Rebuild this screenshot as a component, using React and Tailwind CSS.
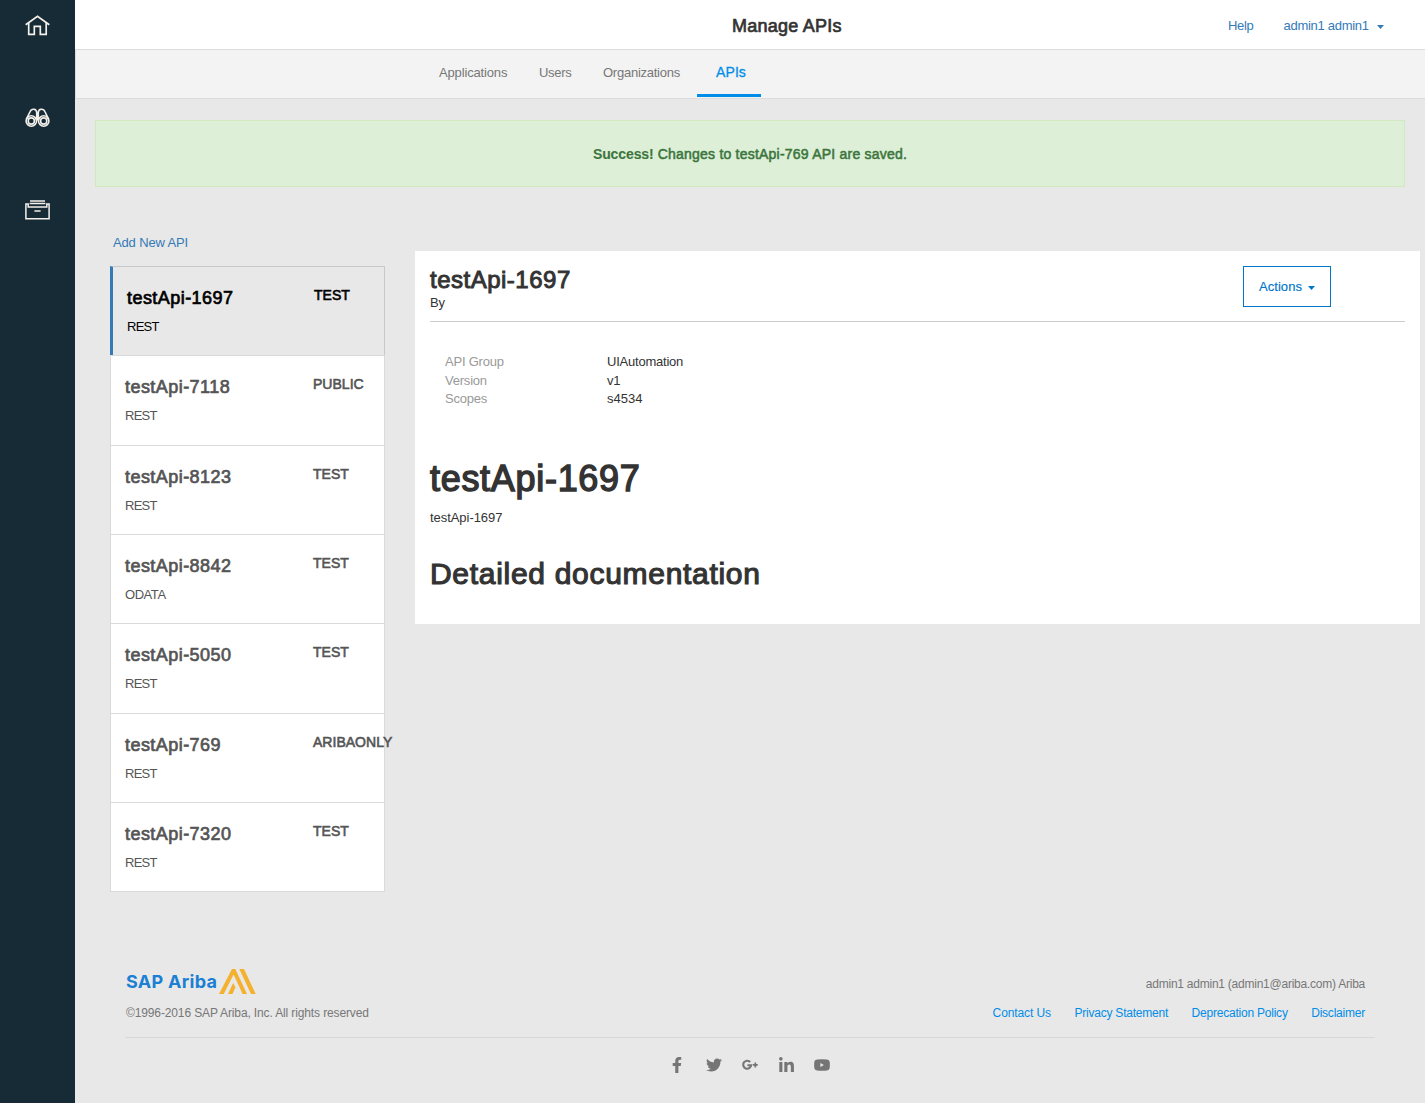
import { FaFacebookF, FaTwitter, FaLinkedinIn } from "react-icons/fa";

const apis = [
  { name: "testApi-1697", type: "REST", status: "TEST", active: true },
  { name: "testApi-7118", type: "REST", status: "PUBLIC" },
  { name: "testApi-8123", type: "REST", status: "TEST" },
  { name: "testApi-8842", type: "ODATA", status: "TEST" },
  { name: "testApi-5050", type: "REST", status: "TEST" },
  { name: "testApi-769", type: "REST", status: "ARIBAONLY" },
  { name: "testApi-7320", type: "REST", status: "TEST" },
];

function Caret({ className }) {
  return (
    <svg className={className} width="7" height="4" viewBox="0 0 7 4" fill="currentColor">
      <path d="M0 0h7L3.5 4z" />
    </svg>
  );
}

function HomeIcon() {
  return (
    <svg width="25" height="21" viewBox="0 0 25 21" fill="none" stroke="#f4f0eb" strokeWidth="1.7">
      <path d="M.7 9.8 12.5 1.2l11.8 8.6" />
      <path d="M3.7 8v11.3h5.6v-8h6v8h5.9V8" />
    </svg>
  );
}

function BinocularsIcon() {
  return (
    <svg width="25" height="20" viewBox="0 0 25 20" fill="none" stroke="#f4f0eb" strokeWidth="1.6">
      <circle cx="6.3" cy="13" r="5.2" />
      <circle cx="6.3" cy="13" r="3.1" />
      <circle cx="18.7" cy="13" r="5.2" />
      <circle cx="18.7" cy="13" r="3.1" />
      <path d="M1.3 11.4 5 3.8C6.4.2 11.6.4 11.7 4.6v7.6M23.7 11.4 20 3.8C18.6.2 13.4.4 13.3 4.6v7.6M11.2 7.6h2.6M11 11.8h3" />
    </svg>
  );
}

function ArchiveIcon() {
  return (
    <svg width="25" height="20" viewBox="0 0 25 20" fill="none" stroke="#f4f0eb" strokeWidth="1.5">
      <path d="M5 1.1h15M4.6 3.6h15.8" />
      <path d="M.9 3.9h2.3v3.2h18.6V3.9h2.3v14.9H.9z" />
      <path d="M9.4 11h6.2" />
    </svg>
  );
}

function GooglePlusIcon() {
  return (
    <svg width="16" height="12" viewBox="0 0 16 12" fill="none" stroke="currentColor">
      <path d="M8.2 3A4 4 0 1 0 9.2 6.2H5.4" strokeWidth="2.1" />
      <path d="M13.3 3.4v5M10.8 5.9h5" strokeWidth="1.7" />
    </svg>
  );
}

function YoutubeIcon() {
  return (
    <svg width="16" height="12" viewBox="0 0 16 12" fill="currentColor" fillRule="evenodd">
      <path d="M3 .4Q8-.1 13 .4 15.6.6 15.7 3q.3 3 0 6-.3 2.4-2.7 2.6-5 .5-10 0Q.6 11.4.3 9 0 6 .3 3 .5.6 3 .4zM6.4 3.9v4.2L9.9 6z" />
    </svg>
  );
}

function ApiRow({ api }) {
  const frame = api.active
    ? "border-t-[#c8c8c8] border-r-[#c8c8c8] border-l-[3px] border-l-[#337ab7] text-black"
    : "border-[#dadada] bg-white text-[#555]";
  return (
    <li className={`flex h-[89.35px] border-t border-r border-l pl-[14px] ${frame}`}>
      <div className={`shrink-0 pt-5 ${api.active ? "w-[187px]" : "w-[188px]"}`}>
        <h3 className="text-[18px] leading-[22px] tracking-[0.45px] [-webkit-text-stroke:0.7px]">{api.name}</h3>
        <p className={`mt-2 text-[13px] leading-[20px] ${api.type === "ODATA" ? "tracking-[-0.45px]" : "tracking-[-0.75px]"}`}>
          {api.type}
        </p>
      </div>
      <span className="w-0 pt-[18px] text-[14px] leading-[20px] tracking-[0.02px] whitespace-nowrap [-webkit-text-stroke:0.6px]">
        {api.status}
      </span>
    </li>
  );
}

export default function App() {
  return (
    <div className="flex h-[1103px] w-[1425px] overflow-hidden bg-[#e8e8e8] font-['Liberation_Sans',Arial,sans-serif] text-[13px] text-[#333]">
      <aside className="flex w-[75px] shrink-0 flex-col items-start bg-[#172b36] pt-[15px] pl-[25px]">
        <HomeIcon />
        <div className="mt-[72px]"><BinocularsIcon /></div>
        <div className="mt-[72px]"><ArchiveIcon /></div>
      </aside>

      <div className="flex min-w-0 flex-1 flex-col">
        <header className="flex h-[50px] items-center border-b border-[#dcdcdc] bg-white text-[#337ab7]">
          <h1 className="mt-[3px] ml-[657px] w-[496px] text-[18px] tracking-[0.25px] text-[#333] [-webkit-text-stroke:0.7px]">
            Manage APIs
          </h1>
          <a className="mt-[2px] w-[55.5px] tracking-[-0.3px]">Help</a>
          <a className="mt-[2px] flex items-center tracking-[-0.28px]">
            admin1 admin1
            <Caret className="mt-[3px] ml-[8px]" />
          </a>
        </header>

        <nav className="flex h-[49px] border-b border-l border-[#dcdcdc] bg-[#f3f3f3] pl-[363px] leading-[46px] text-[#777]">
          <a className="w-[100px] tracking-[-0.15px]">Applications</a>
          <a className="w-[64px] tracking-[-0.3px]">Users</a>
          <a className="w-[94px] tracking-[-0.25px]">Organizations</a>
          <a className="h-[47px] w-[64px] border-b-[3px] border-[#008de9] pl-[19px] text-[14px] leading-[44px] tracking-[0.1px] text-[#008de9] [-webkit-text-stroke:0.3px]">
            APIs
          </a>
        </nav>

        <div className="mt-[21px] mr-5 ml-5 flex h-[67px] items-center justify-center border border-[#d0e9c0] bg-[#deefd8] pt-[2px] text-[14px] tracking-[0.22px] text-[#3c763d]">
          <p className="[-webkit-text-stroke:0.55px]">
            <strong className="tracking-[-0.1px] [-webkit-text-stroke:0.1px]">Success!</strong> Changes to testApi-769 API are saved.
          </p>
        </div>

        <main className="flex h-[706px]">
          <section className="ml-[35px] w-[275px] pt-[46px]">
            <a className="ml-[3px] block leading-5 tracking-[-0.15px] text-[#337ab7]">Add New API</a>
            <ul className="mt-[13px] border-b border-[#dadada]">
              {apis.map((api) => (
                <ApiRow key={api.name} api={api} />
              ))}
            </ul>
          </section>

          <article className="mt-16 ml-[30px] h-[373px] w-[1005px] bg-white px-[15px]">
            <div className="flex h-[71px] justify-between border-b border-[#ccc] pt-[15px]">
              <div>
                <h2 className="text-[24px] leading-[28px] tracking-[0.5px] [-webkit-text-stroke:0.95px]">testApi-1697</h2>
                <p className="leading-[18px] tracking-[-0.1px]">By</p>
              </div>
              <button className="mr-[74px] flex h-[41px] w-[88px] items-center justify-center border border-[#0076cb] tracking-[0.05px] text-[#0076cb] [-webkit-text-stroke:0.15px]">
                Actions
                <Caret className="mt-[3px] ml-[6px]" />
              </button>
            </div>
            <dl className="mt-[31px] grid grid-cols-[162px_1fr] pl-[15px] leading-[18.5px] tracking-[-0.22px]">
              <dt className="text-[#999]">API Group</dt>
              <dd>UIAutomation</dd>
              <dt className="text-[#999]">Version</dt>
              <dd>v1</dd>
              <dt className="text-[#999]">Scopes</dt>
              <dd className="tracking-normal">s4534</dd>
            </dl>
            <h2 className="mt-[50px] text-[36px] leading-[40px] tracking-[0.7px] [-webkit-text-stroke:1.4px]">testApi-1697</h2>
            <p className="mt-[9px] leading-5 tracking-[-0.05px]">testApi-1697</p>
            <h2 className="mt-[28px] text-[30px] leading-[35px] tracking-[0.7px] [-webkit-text-stroke:1.15px]">
              Detailed documentation
            </h2>
          </article>
        </main>

        <footer className="mr-[50px] ml-[50px] pt-[74px] text-[12px] text-[#777]">
          <div className="flex h-[71px] justify-between border-b border-[#d8d8d8] pr-[10px]">
            <div>
              <div className="flex h-[28px] items-start">
                <span className="w-[94px] pt-[3px] pl-px font-['Inter',sans-serif] text-[18px] leading-[24px] font-bold tracking-[0.3px] whitespace-nowrap text-[#1b7fd4]">
                  SAP Ariba
                </span>
                <svg className="mt-[2px]" width="37" height="25" viewBox="0 0 37 25" fill="#f5b02d">
                  <path d="M0 25 13 0h3.3L28 25h-4.4L14.6 5.4 4.7 25z" />
                  <path d="M20.3 0H25l11.7 25H32z" />
                  <path d="m9 25 5.2-11 2.2 4.2L13.5 25z" />
                </svg>
              </div>
              <p className="mt-[9px] pl-px leading-[18px] tracking-[-0.13px]">©1996-2016 SAP Ariba, Inc. All rights reserved</p>
            </div>
            <div className="text-right">
              <p className="mt-[8px] leading-[18px] tracking-[-0.24px]">admin1 admin1 (admin1@ariba.com) Ariba</p>
              <p className="mt-[11px] flex justify-end gap-[23.5px] leading-[18px] tracking-[-0.22px] text-[#008de9]">
                <a className="tracking-[-0.1px]">Contact Us</a>
                <a>Privacy Statement</a>
                <a>Deprecation Policy</a>
                <a>Disclaimer</a>
              </p>
            </div>
          </div>
          <div className="mt-[19px] flex h-4 items-center pl-[544px] text-[#757575]">
            <span className="flex w-[37px] items-center"><FaFacebookF size={16} /></span>
            <span className="flex w-9 items-center"><FaTwitter size={16} /></span>
            <span className="flex w-9 items-center"><GooglePlusIcon /></span>
            <span className="flex w-9 items-center"><FaLinkedinIn size={17} /></span>
            <YoutubeIcon />
          </div>
        </footer>
      </div>
    </div>
  );
}
